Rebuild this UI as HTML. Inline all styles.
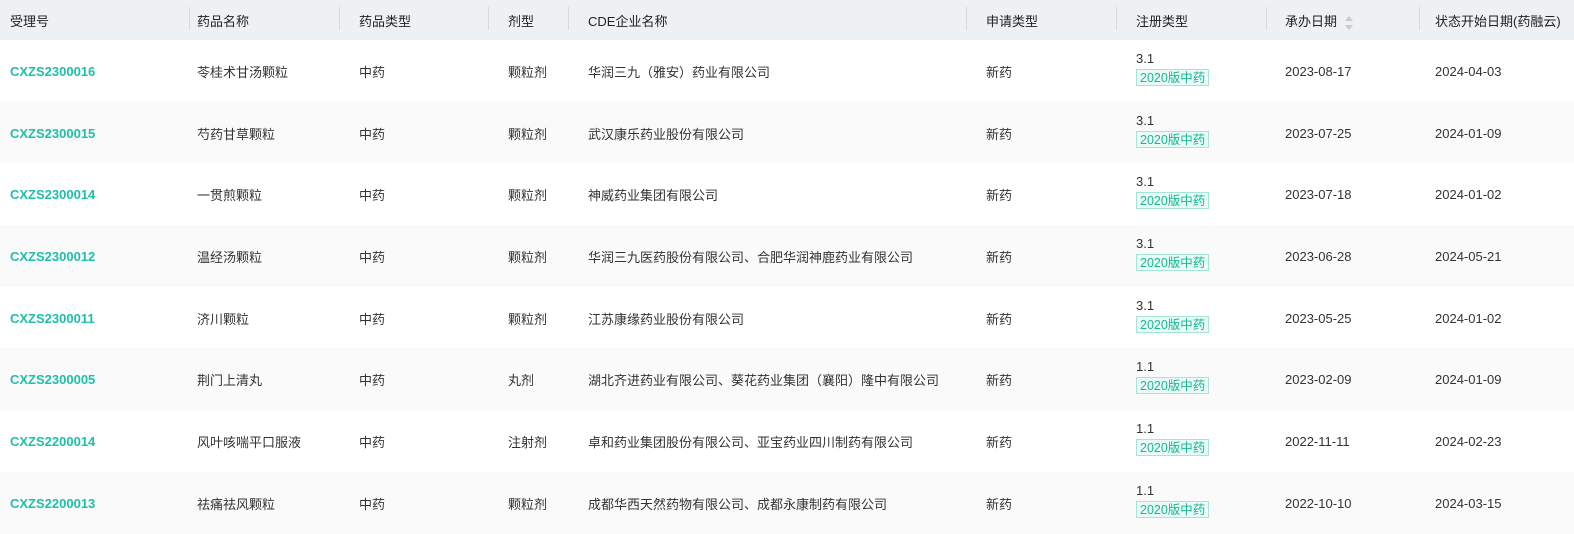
<!DOCTYPE html>
<html><head><meta charset="utf-8"><style>
*{box-sizing:border-box}
body{margin:0;width:1574px;height:526px;overflow:hidden;background:#fff;font-family:"Liberation Sans","Noto Sans CJK SC",sans-serif;font-size:13px;color:#333}
.r{display:flex;height:61.7px;align-items:center}
.r:nth-child(odd){background:#fafafa}
.h{height:40px;background:#eef1f3!important;color:#222}
.r>div{flex:none;position:relative;padding-top:1px}
.h>div+div:before{content:"";position:absolute;left:0;top:-3px;height:23px;width:1px;background:#d6d9dc}
.c1{width:189px;padding-left:10px}
.c2{width:150px;padding-left:8px}
.c3{width:149px;padding-left:20px}
.c4{width:80px;padding-left:20px}
.c5{width:398px;padding-left:20px}
.c6{width:150px;padding-left:20px}
.c7{width:150px;padding-left:20px}
.c8{width:153px;padding-left:19px}
.c9{width:155px;padding-left:16px}
.r:not(.h) .c1{color:#1fbfa9;font-weight:bold}
.c7 .n{line-height:16px;margin-top:-6px}
.tag{display:inline-block;border:1px solid #a5e5d8;background:#eafaf6;color:#17b796;padding:0 3px;height:17px;line-height:16px;font-size:12.5px;margin-top:2px}
.h .c1:before{display:none}
.s{display:inline-block;vertical-align:middle;margin-left:8px;width:9px;height:14px;position:relative}
.s:before,.s:after{content:"";position:absolute;left:0;border-left:4.5px solid transparent;border-right:4.5px solid transparent}
.s:before{top:0;border-bottom:5px solid #c8ccd0}.s:after{bottom:0;border-top:5px solid #c8ccd0}
.h>div{top:0}
</style></head><body>
<div class="r h"><div class="c1">受理号</div><div class="c2">药品名称</div><div class="c3">药品类型</div><div class="c4">剂型</div><div class="c5">CDE企业名称</div><div class="c6">申请类型</div><div class="c7">注册类型</div><div class="c8">承办日期<span class="s"></span></div><div class="c9">状态开始日期(药融云)</div></div>
<div class="r"><div class="c1">CXZS2300016</div><div class="c2">苓桂术甘汤颗粒</div><div class="c3">中药</div><div class="c4">颗粒剂</div><div class="c5">华润三九（雅安）药业有限公司</div><div class="c6">新药</div><div class="c7"><div class="n">3.1</div><span class="tag">2020版中药</span></div><div class="c8">2023-08-17</div><div class="c9">2024-04-03</div></div>
<div class="r"><div class="c1">CXZS2300015</div><div class="c2">芍药甘草颗粒</div><div class="c3">中药</div><div class="c4">颗粒剂</div><div class="c5">武汉康乐药业股份有限公司</div><div class="c6">新药</div><div class="c7"><div class="n">3.1</div><span class="tag">2020版中药</span></div><div class="c8">2023-07-25</div><div class="c9">2024-01-09</div></div>
<div class="r"><div class="c1">CXZS2300014</div><div class="c2">一贯煎颗粒</div><div class="c3">中药</div><div class="c4">颗粒剂</div><div class="c5">神威药业集团有限公司</div><div class="c6">新药</div><div class="c7"><div class="n">3.1</div><span class="tag">2020版中药</span></div><div class="c8">2023-07-18</div><div class="c9">2024-01-02</div></div>
<div class="r"><div class="c1">CXZS2300012</div><div class="c2">温经汤颗粒</div><div class="c3">中药</div><div class="c4">颗粒剂</div><div class="c5">华润三九医药股份有限公司、合肥华润神鹿药业有限公司</div><div class="c6">新药</div><div class="c7"><div class="n">3.1</div><span class="tag">2020版中药</span></div><div class="c8">2023-06-28</div><div class="c9">2024-05-21</div></div>
<div class="r"><div class="c1">CXZS2300011</div><div class="c2">济川颗粒</div><div class="c3">中药</div><div class="c4">颗粒剂</div><div class="c5">江苏康缘药业股份有限公司</div><div class="c6">新药</div><div class="c7"><div class="n">3.1</div><span class="tag">2020版中药</span></div><div class="c8">2023-05-25</div><div class="c9">2024-01-02</div></div>
<div class="r"><div class="c1">CXZS2300005</div><div class="c2">荆门上清丸</div><div class="c3">中药</div><div class="c4">丸剂</div><div class="c5">湖北齐进药业有限公司、葵花药业集团（襄阳）隆中有限公司</div><div class="c6">新药</div><div class="c7"><div class="n">1.1</div><span class="tag">2020版中药</span></div><div class="c8">2023-02-09</div><div class="c9">2024-01-09</div></div>
<div class="r"><div class="c1">CXZS2200014</div><div class="c2">风叶咳喘平口服液</div><div class="c3">中药</div><div class="c4">注射剂</div><div class="c5">卓和药业集团股份有限公司、亚宝药业四川制药有限公司</div><div class="c6">新药</div><div class="c7"><div class="n">1.1</div><span class="tag">2020版中药</span></div><div class="c8">2022-11-11</div><div class="c9">2024-02-23</div></div>
<div class="r"><div class="c1">CXZS2200013</div><div class="c2">祛痛祛风颗粒</div><div class="c3">中药</div><div class="c4">颗粒剂</div><div class="c5">成都华西天然药物有限公司、成都永康制药有限公司</div><div class="c6">新药</div><div class="c7"><div class="n">1.1</div><span class="tag">2020版中药</span></div><div class="c8">2022-10-10</div><div class="c9">2024-03-15</div></div>
</body></html>
